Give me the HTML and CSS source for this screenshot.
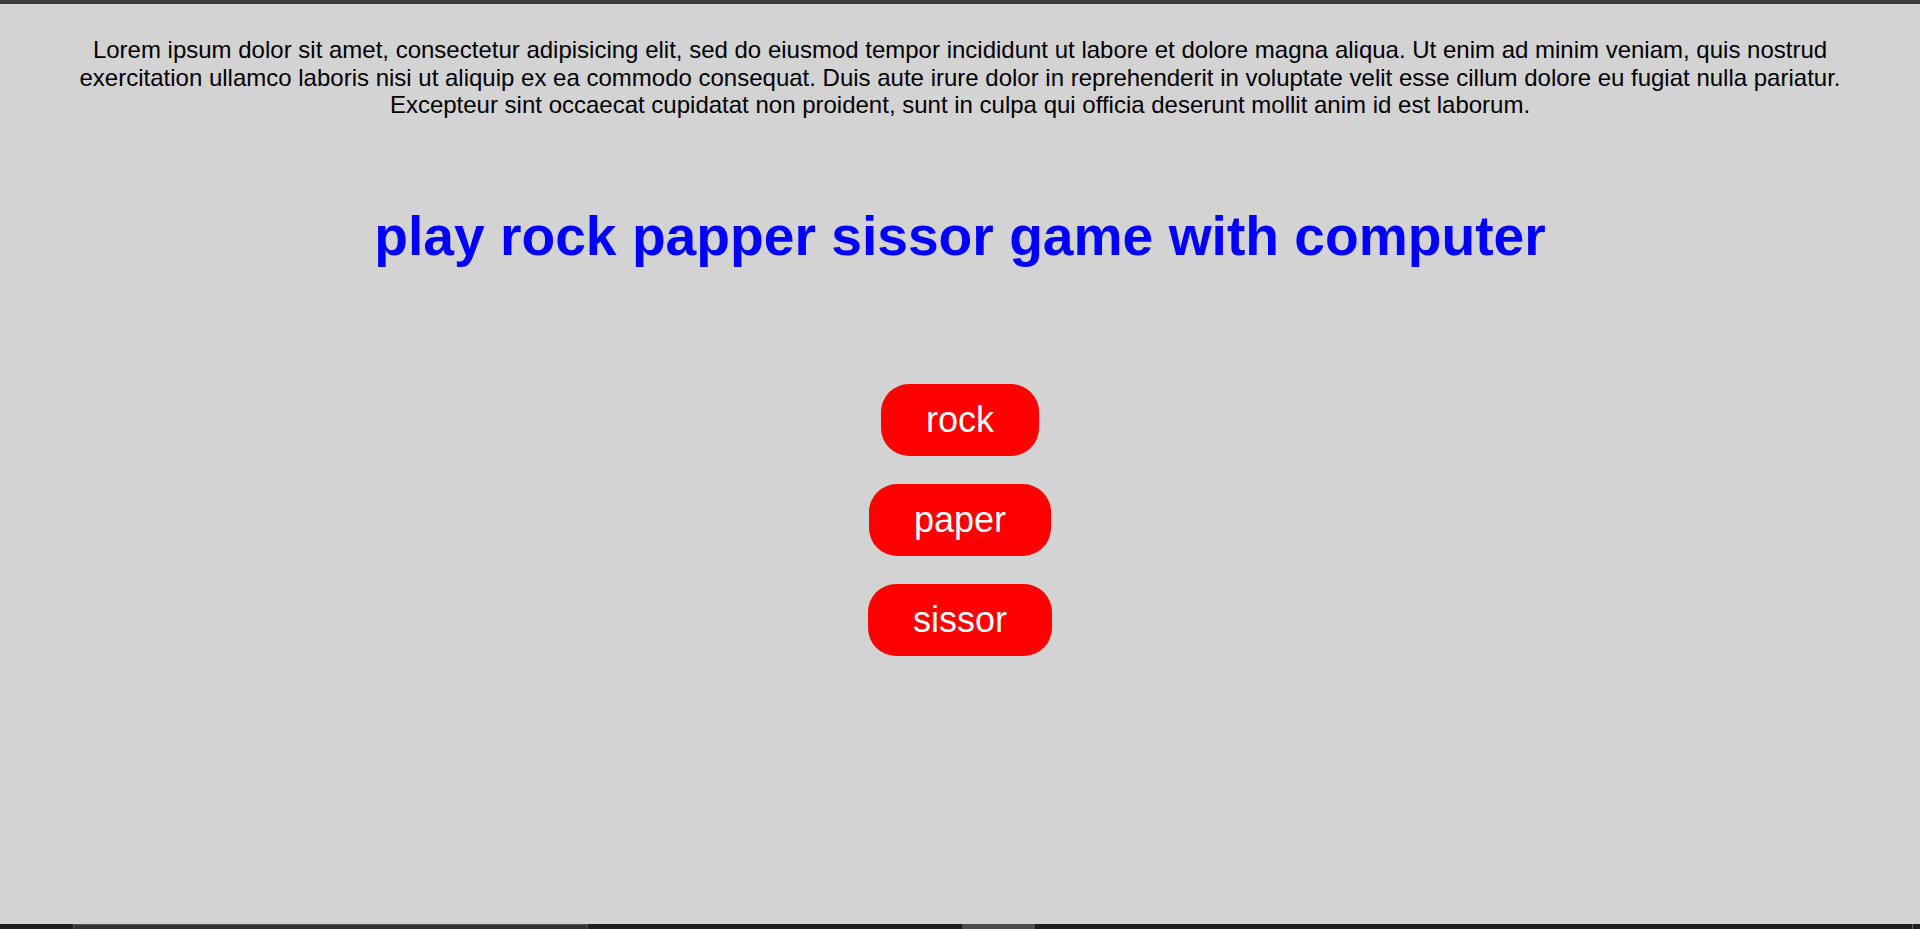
FILE: index.html
```html
<!DOCTYPE html>
<html lang="en">
<head>
<meta charset="utf-8">
<title>Rock Paper Sissor</title>
<link rel="stylesheet" href="styles.css">
</head>
<body>
<div class="topbar"></div>
<main class="page">
  <p class="intro">Lorem ipsum dolor sit amet, consectetur adipisicing elit, sed do eiusmod tempor incididunt ut labore et dolore magna aliqua. Ut enim ad minim veniam, quis nostrud exercitation ullamco laboris nisi ut aliquip ex ea commodo consequat. Duis aute irure dolor in reprehenderit in voluptate velit esse cillum dolore eu fugiat nulla pariatur. Excepteur sint occaecat cupidatat non proident, sunt in culpa qui officia deserunt mollit anim id est laborum.</p>
  <h1 class="title">play rock papper sissor game with computer</h1>
  <div class="choices">
    <button class="choice">rock</button>
    <button class="choice">paper</button>
    <button class="choice">sissor</button>
  </div>
</main>
<div class="bottombar">
  <div class="gap gap-a"></div>
  <div class="thumb thumb-a"></div>
  <div class="gap gap-b"></div>
  <div class="thumb thumb-b"></div>
  <div class="gap gap-c"></div>
  <div class="edge"></div>
</div>
</body>
</html>
```
FILE: styles.css
```css
html, body {
  margin: 0;
  padding: 0;
}
body {
  height: 100vh;
  display: flex;
  flex-direction: column;
  background: #d3d3d3;
  font-family: "Liberation Sans", Arial, sans-serif;
  overflow: hidden;
}
.topbar {
  height: 4px;
  background: #3c3c3c;
  flex: none;
}
.page {
  flex: 1;
  display: flex;
  flex-direction: column;
  align-items: center;
}
.intro {
  margin: 32px 0 0;
  padding: 0 50px;
  box-sizing: border-box;
  width: 100%;
  text-align: center;
  font-size: 24px;
  line-height: 27.5px;
  color: #000;
}
.title {
  margin: 85px 0 0;
  font-size: 55.2px;
  font-weight: bold;
  color: #0000ff;
  text-align: center;
  line-height: normal;
}
.choices {
  margin-top: 116px;
  display: flex;
  flex-direction: column;
  align-items: center;
  gap: 28px;
}
.choice {
  font-family: "Liberation Sans", Arial, sans-serif;
  font-size: 36px;
  line-height: 42px;
  padding: 15px 45px;
  border: none;
  border-radius: 28px;
  background: #ff0000;
  color: #ffffff;
  cursor: pointer;
}
.bottombar {
  flex: none;
  height: 5px;
  display: flex;
  background: #1f1f1f;
}
.gap-a { width: 73px; }
.thumb-a {
  width: 513px;
  background: #333333;
  border: 1px solid #555555;
  border-bottom: none;
}
.gap-b { width: 374px; }
.thumb-b {
  width: 73px;
  background: #4d4d4d;
}
.gap-c { flex: 1; }
.edge {
  width: 1px;
  margin-right: 7px;
  background: #666666;
}
```
